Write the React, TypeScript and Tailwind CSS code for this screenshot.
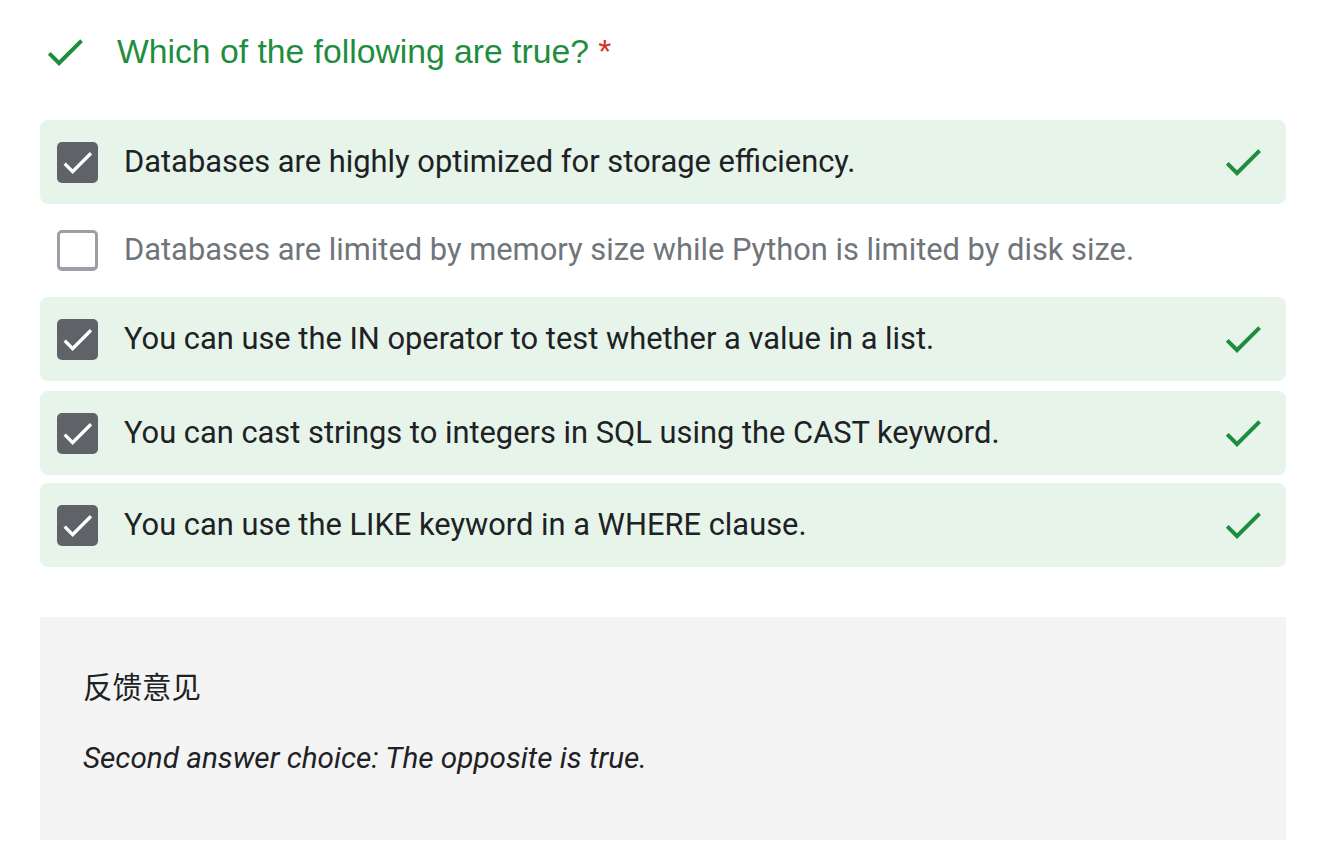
import React from 'react';

type Choice = { text: string; checked: boolean };

const choices: Choice[] = [
  { text: 'Databases are highly optimized for storage efficiency.', checked: true },
  { text: 'Databases are limited by memory size while Python is limited by disk size.', checked: false },
  { text: 'You can use the IN operator to test whether a value in a list.', checked: true },
  { text: 'You can cast strings to integers in SQL using the CAST keyword.', checked: true },
  { text: 'You can use the LIKE keyword in a WHERE clause.', checked: true },
];

function CheckIcon({ className }: { className?: string }) {
  return (
    <svg viewBox="0 0 24 24" className={className} fill="currentColor">
      <path d="M9 16.17L4.83 12l-1.42 1.41L9 19 21 7l-1.41-1.41z" />
    </svg>
  );
}

function Box({ checked }: { checked: boolean }) {
  if (!checked) {
    return <div className="w-[41px] h-[41px] shrink-0 rounded-[5px] border-[3px] border-b-[4px] border-[#9aa0a6] bg-white" />;
  }
  return (
    <div className="w-[41px] h-[41px] shrink-0 rounded-[5px] bg-[#5f6368] flex items-center justify-center">
      <svg viewBox="0 0 24 24" className="w-[39px] h-[39px] text-white" fill="currentColor">
        <path d="M9 16.17L4.83 12l-1.42 1.41L9 19 21 7l-1.41-1.41z" />
      </svg>
    </div>
  );
}

export default function App() {
  return (
    <div className="min-h-[862px] bg-white pl-[40px] w-[1286px]" style={{ fontFamily: 'Roboto, "Noto Sans CJK SC", sans-serif' }}>
      {/* question title */}
      <div className="flex items-center h-[106px] pb-[2px]">
        <CheckIcon className="w-[48px] h-[48px] text-[#1e8e3e] ml-[1px]" />
        <div
          className="ml-[28px] text-[33.7px] text-[#1e8e3e] leading-none"
          style={{ fontFamily: '"Liberation Sans", Arial, sans-serif' }}
        >
          Which of the following are true? <span className="text-[#d93025]">*</span>
        </div>
      </div>

      <div className="mt-[14px] flex flex-col">
        {choices.map((c, i) => (
          <div
            key={i}
            className={
              c.checked
                ? 'flex items-center h-[84px] rounded-[8px] bg-[#e6f4ea] pl-[17px] pr-[19px] ' +
                  (i === 0 ? '' : i === 2 ? '' : i === 3 ? 'mt-[10px]' : 'mt-[8px]')
                : 'flex items-center h-[93px] pl-[17px] pr-[19px] pb-[1px]'
            }
          >
            <Box checked={c.checked} />
            <div
              className={
                'ml-[26px] flex-1 text-[30.85px] leading-none ' +
                (c.checked ? 'text-[#202124]' : 'text-[#70757a]')
              }
            >
              {c.text}
            </div>
            {c.checked && <CheckIcon className="w-[48px] h-[48px] text-[#1e8e3e]" />}
          </div>
        ))}
      </div>

      {/* feedback */}
      <div className="mt-[50px] h-[223px] bg-[#f4f4f4] pl-[43px] pt-[51px]">
        <div className="text-[29.5px] leading-[40px] text-[#202124]">反馈意见</div>
        <div className="mt-[32px] text-[29.7px] italic leading-[36px] text-[#202124]">
          Second answer choice: The opposite is true.
        </div>
      </div>
    </div>
  );
}
